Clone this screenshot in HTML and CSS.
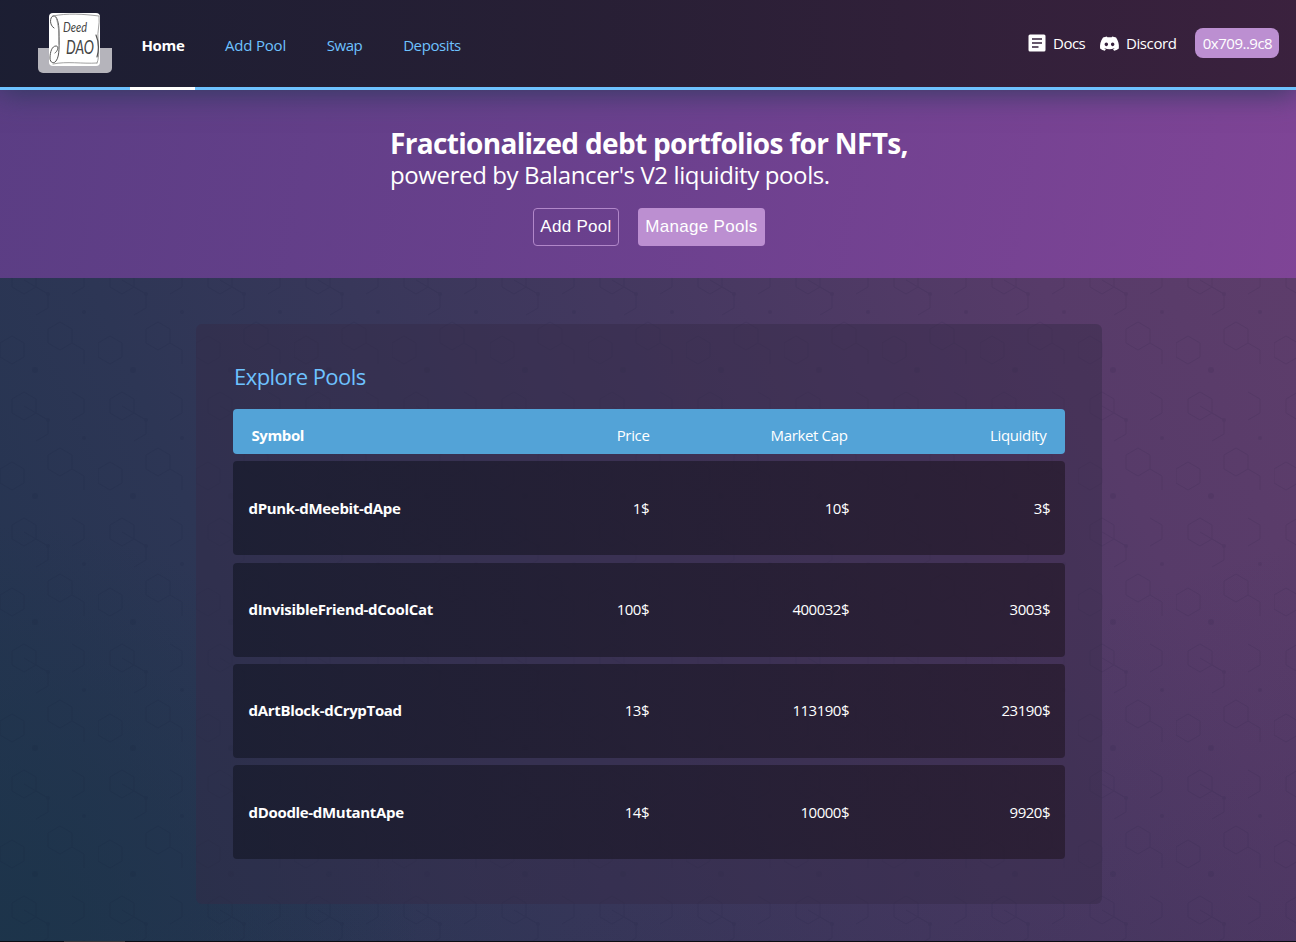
FILE: index.html
```html
<!DOCTYPE html>
<html lang="en">
<head>
<meta charset="utf-8">
<title>Deed DAO</title>
<link rel="stylesheet" href="styles.css">
</head>
<body>
<div class="app">
  <svg class="texture" aria-hidden="true">
    <defs>
      <pattern id="hex" width="98" height="126" patternUnits="userSpaceOnUse">
        <g fill="none" stroke="#0b1030" stroke-width="1">
          <path d="M24 14l12 7v14l-12 7-12-7V21zM36 35l12 7v14l-12 7M60 70l12 7v14l-12 7-12-7V77zM72 91l12 7v14M12 84l12 7v14l-12 7-12-7V91zM72 14l12 7v14l-12 7M24 28l24 14"/>
        </g>
        <g fill="#0b1030"><circle cx="48" cy="42" r="2"/><circle cx="84" cy="60" r="2"/><circle cx="35" cy="118" r="3"/></g>
      </pattern>
    </defs>
    <rect width="100%" height="100%" fill="url(#hex)"/>
  </svg>

  <header class="header">
    <a class="logo">
      <svg class="logo-art" viewBox="0 0 51 53">
        <rect width="51" height="53" rx="4" fill="#fff"/>
        <g fill="none" stroke="#555" stroke-linecap="round">
          <path d="M5 15C0 12 1 4 4 3c4-1 6 7 6 16 0 12 1 24-3 29-2 3-6 2-6-3 0-6 2-12 6-12 3 0 2 5-1 7" stroke-width="1"/>
          <path d="M4 3C18 0 34 1 50 3c1 9-2 15-1 24 0 8 2 16-1 23" stroke-width=".8" stroke="#888"/>
          <path d="M4 51c14-3 29 0 44-1M7 4c3 9 3 18 3 27" stroke-width=".8" stroke="#888"/>
          <path d="M47 22c3 7 3 15 1 22" stroke-width="1.2"/>
        </g>
        <text class="logo-deed" x="14" y="19" textLength="24" lengthAdjust="spacingAndGlyphs">Deed</text>
        <text class="logo-dao" x="17" y="41" textLength="28" lengthAdjust="spacingAndGlyphs">DAO</text>
      </svg>
    </a>
    <nav class="nav">
      <a class="tab tab-home">Home</a>
      <a class="tab tab-add">Add Pool</a>
      <a class="tab tab-swap">Swap</a>
      <a class="tab tab-deposits">Deposits</a>
    </nav>
    <div class="links">
      <a class="link link-docs">
        <svg class="docs-icon" viewBox="0 0 18 18"><path fill="#fff" fill-rule="evenodd" d="M2 .5h14A1.500 1.500 0 0 1 17.500 2v14a1.500 1.500 0 0 1-1.500 1.500H2A1.500 1.500 0 0 1 .5 16V2A1.500 1.500 0 0 1 2 .5zM4 4.200v1.600h10V4.200zm0 4v1.600h10V8.200zm0 4v1.600h6.500v-1.600z"/></svg>
        <span>Docs</span>
      </a>
      <a class="link link-discord">
        <svg class="discord-icon" viewBox="0 0 24 18"><path fill="#fff" fill-rule="evenodd" d="M20.300 1.500A19.800 19.800 0 0 0 15.400 0l-.6 1.200a18.300 18.300 0 0 0-5.500 0L8.700 0a19.700 19.700 0 0 0-4.900 1.500C.5 6.200-.3 10.700.1 15.200a20 20 0 0 0 6 3l1.300-2-1.900-.9.400-.3c3.900 1.800 8.200 1.800 12.100 0l.4.300-1.900.9 1.300 2a20 20 0 0 0 6-3c.5-5.200-.8-9.700-3.500-13.700zM8 12.500c-1.200 0-2.200-1.100-2.200-2.400S6.800 7.700 8 7.700s2.200 1.100 2.200 2.400-1 2.400-2.200 2.400zm8 0c-1.200 0-2.200-1.100-2.200-2.400s1-2.400 2.200-2.400 2.200 1.100 2.200 2.400-1 2.400-2.200 2.400z"/></svg>
        <span>Discord</span>
      </a>
      <button class="wallet">0x709..9c8</button>
    </div>
  </header>

  <section class="hero">
    <div class="hero-copy">
      <h1 class="hero-title">Fractionalized debt portfolios for NFTs,</h1>
      <p class="hero-sub">powered by Balancer's V2 liquidity pools.</p>
      <div class="actions">
        <button class="btn btn-outline">Add Pool</button>
        <button class="btn btn-solid">Manage Pools</button>
      </div>
    </div>
  </section>

  <main class="panel">
    <h2 class="panel-title">Explore Pools</h2>
    <div class="row row-head"><b>Symbol</b><span>Price</span><span>Market Cap</span><span>Liquidity</span></div>
    <div class="row row-pool"><b>dPunk-dMeebit-dApe</b><span>1$</span><span>10$</span><span>3$</span></div>
    <div class="row row-pool"><b>dInvisibleFriend-dCoolCat</b><span>100$</span><span>400032$</span><span>3003$</span></div>
    <div class="row row-pool"><b>dArtBlock-dCrypToad</b><span>13$</span><span>113190$</span><span>23190$</span></div>
    <div class="row row-pool"><b>dDoodle-dMutantApe</b><span>14$</span><span>10000$</span><span>9920$</span></div>
  </main>
  <div class="edge"><i class="edge-mark"></i></div>
</div>
</body>
</html>
```

FILE: styles.css
```css
* { box-sizing: border-box; }
body {
  margin: 0;
  font-family: "Open Sans", "Noto Sans", sans-serif;
  font-size: 15px;
  color: #fff;
  overflow: hidden;
}
h1, h2, p { margin: 0; font-weight: 400; }
button { font: inherit; color: #fff; padding: 0; border: 0; }
.app {
  position: relative;
  isolation: isolate;
  height: 942px;
  display: flex;
  flex-direction: column;
  background:
    radial-gradient(circle at 0 100%, rgba(28, 52, 74, .9), rgba(28, 52, 74, 0) 420px),
    linear-gradient(67deg, #22344f 0%, #2d3655 22%, #43385f 52%, #573b69 78%, #603e6c 100%);
}
.app::before {
  content: "";
  position: absolute;
  inset: 0;
  z-index: -1;
  background: linear-gradient(162deg, transparent 70%, rgba(40, 40, 75, .2));
}
.texture { position: absolute; inset: 0; z-index: -1; width: 100%; height: 100%; opacity: .07; }

.header {
  display: flex;
  align-items: flex-start;
  height: 90px;
  flex: none;
  padding-left: 38px;
  padding-right: 17px;
  border-bottom: 3px solid #6ec2ff;
  background: linear-gradient(90deg, rgba(27, 29, 49, .96), rgba(38, 30, 51, .96) 45%, rgba(57, 32, 60, .96));
  box-shadow: 0 4px 26px rgba(38, 58, 85, .75);
  z-index: 1;
}
.logo {
  display: flex;
  justify-content: center;
  width: 74px;
  height: 60px;
  margin: 13px 18px 0 0;
  padding-right: 1px;
  border-radius: 5px;
  background: linear-gradient(#b5b4bb, #b5b4bb) 0 100% / 100% 25px no-repeat;
}
.logo::before {
  content: "";
}
.logo-art { width: 51px; height: 53px; }
.logo-deed, .logo-dao { font-family: Lato, sans-serif; font-style: italic; fill: #444; }
.logo-deed { font-size: 14px; }
.logo-dao { font-size: 19px; }
.nav { display: flex; gap: 18px; height: 90px; }
.tab {
  display: flex;
  justify-content: center;
  padding-top: 35px;
  padding-left: 1px;
  line-height: 21px;
  color: #6ec2ff;
  white-space: nowrap;
  border-bottom: 3px solid transparent;
}
.tab-home { width: 65px; font-weight: 700; color: #fff; border-color: #fff; letter-spacing: -.3px; }
.tab-add { width: 84px; letter-spacing: -.2px; }
.tab-swap { width: 58px; letter-spacing: -.5px; }
.tab-deposits { width: 81px; letter-spacing: -.4px; }
.links { display: flex; align-items: center; margin-left: auto; padding-top: 28px; }
.link { display: flex; align-items: center; line-height: 30px; }
.link-docs { width: 72px; gap: 7px; letter-spacing: -.5px; }
.link-discord { width: 95px; gap: 7px; letter-spacing: -.4px; }
.docs-icon { width: 18px; height: 18px; }
.discord-icon { width: 19px; height: 15px; overflow: visible; }
.wallet { width: 84px; height: 30px; padding-left: 1px; border-radius: 8px; background: #bc8fd1; letter-spacing: -.5px; }

.hero {
  display: flex;
  justify-content: center;
  height: 188px;
  flex: none;
  padding: 37px 2px 0 4px;
  background: linear-gradient(102deg, rgba(94, 62, 135, .94), rgba(110, 65, 145, .94) 50%, rgba(129, 69, 153, .94));
}
.hero-copy { width: 518px; white-space: nowrap; }
.hero-title { font-size: 28px; line-height: 32px; font-weight: 700; letter-spacing: -.67px; }
.hero-sub { font-size: 24px; line-height: 31px; letter-spacing: -.39px; }
.actions { display: flex; justify-content: center; gap: 19px; margin-top: 18px; }
.btn { height: 38px; border-radius: 4px; font: 17px "Liberation Sans", Arial, sans-serif; }
.btn-outline { width: 86px; padding-bottom: 1px; border: 1px solid #b187c9; background: transparent; letter-spacing: .3px; }
.btn-solid { width: 127px; padding-bottom: 1px; background: #bc8fd1; letter-spacing: .3px; }

.panel {
  width: 906px;
  height: 580px;
  flex: none;
  margin: 46px 0 0 196px;
  padding: 37px 37px 0;
  border-radius: 6px;
  background: rgba(53, 43, 70, .45);
}
.panel-title { height: 48px; padding-left: 1px; font-size: 22px; line-height: 30px; color: #6ec2ff; letter-spacing: -.55px; }
.row {
  display: grid;
  grid-template-columns: 216px 1fr 200px 201px;
  align-items: center;
  border-radius: 4px;
  text-align: right;
}
.row b { text-align: left; white-space: nowrap; }
.row-head { height: 45px; padding: 7px 18.500px 0; background: #53a3d7; margin-bottom: 7.400px; grid-template-columns: 216px 1fr 198px 199px; }
.row-head b { letter-spacing: -.4px; }
.row-head span { letter-spacing: -.35px; }
.row-pool {
  height: 94px;
  padding: 0 15px 1px;
  background: linear-gradient(90deg, rgba(23, 26, 43, .75), rgba(38, 26, 44, .75));
  margin-bottom: 7.300px;
}
.row-pool b { padding-left: .5px; letter-spacing: -.32px; }
.row-pool span { letter-spacing: -.5px; }
.edge { height: 1px; margin-top: auto; padding-left: 64px; background: #0c0d14; }
.edge-mark { display: block; width: 61px; height: 1px; background: #3a3638; }
```
